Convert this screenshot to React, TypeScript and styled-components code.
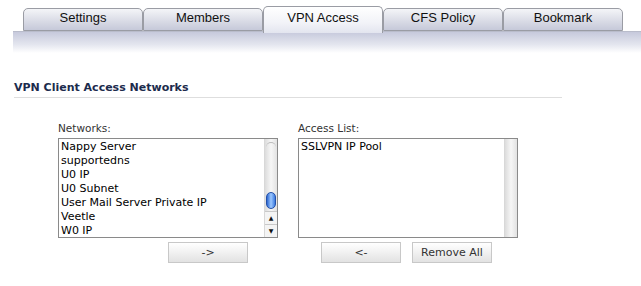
import React from "react";
import styled, { createGlobalStyle } from "styled-components";

const Global = createGlobalStyle`
  html, body {
    margin: 0;
    padding: 0;
    background: #fff;
  }
  body {
    font-family: "DejaVu Sans", Verdana, sans-serif;
  }
`;

const tabs = ["Settings", "Members", "VPN Access", "CFS Policy", "Bookmark"];
const networks = [
  "Nappy Server",
  "supportedns",
  "U0 IP",
  "U0 Subnet",
  "User Mail Server Private IP",
  "Veetle",
  "W0 IP",
];

const Page = styled.div`
  width: 641px;
  height: 286px;
  overflow: hidden;
`;

const TabBar = styled.div`
  display: flex;
  align-items: flex-end;
  height: 31px;
  padding-left: 23px;
`;

const Tab = styled.div<{ $active?: boolean }>`
  box-sizing: border-box;
  width: 120px;
  height: ${(p) => (p.$active ? "27px" : "23px")};
  margin-bottom: ${(p) => (p.$active ? "-2px" : "0")};
  border: 1px solid #9a9ca4;
  border-bottom: ${(p) => (p.$active ? "none" : "1px solid #9a9ca4")};
  border-radius: 5px 5px 0 0;
  background: ${(p) =>
    p.$active
      ? "linear-gradient(#ffffff, #f2f3f8 60%, #e3e5ef)"
      : "linear-gradient(#f4f5f8, #d8dae5 60%, #c6c9d9)"};
  font-family: "Liberation Sans", Arial, sans-serif;
  font-size: 13px;
  color: #111;
  text-align: center;
  line-height: ${(p) => (p.$active ? "22px" : "17px")};
  position: relative;
  z-index: ${(p) => (p.$active ? 2 : 1)};
`;

const Band = styled.div`
  margin-left: 13px;
  height: 21px;
  background: linear-gradient(#c6c9dc, #e4e6ef 60%, #ffffff);
  border-top: 1px solid #b9bccb;
`;

const Section = styled.div`
  padding: 28px 0 0 14px;
`;

const Heading = styled.div`
  width: 548px;
  font-weight: bold;
  font-size: 11px;
  color: #1c2b4d;
  padding-bottom: 3px;
  border-bottom: 1px solid #dedede;
`;

const Lists = styled.div`
  display: flex;
  gap: 20px;
  margin: 24px 0 0 44px;
`;

const Column = styled.div`
  display: flex;
  flex-direction: column;
  width: 220px;
`;

const Label = styled.div`
  font-size: 10.5px;
  color: #333;
  height: 16px;
`;

const ListBox = styled.div`
  box-sizing: border-box;
  height: 100px;
  border: 1px solid #8a8a8a;
  display: flex;
  background: #fff;
`;

const Items = styled.div`
  flex: 1;
  padding: 1px 0 0 2px;
  font-size: 11px;
  line-height: 14px;
  color: #000;
  white-space: nowrap;
  overflow: hidden;
`;

const Track = styled.div`
  width: 12px;
  display: flex;
  flex-direction: column;
  align-items: center;
  border-left: 1px solid #d8d8d8;
  background: linear-gradient(90deg, #dcdcdc, #f6f6f6 50%, #e2e2e2);
`;

const Gutter = styled.div`
  flex: 1;
  width: 10px;
  position: relative;
`;

const TrackCap = styled.div`
  position: absolute;
  top: 3px;
  left: 0;
  right: 0;
  height: 8px;
  border-radius: 5px 5px 0 0;
  border-top: 1px solid #bbb;
`;

const Thumb = styled.div`
  position: absolute;
  top: 53px;
  left: 0;
  width: 10px;
  height: 17px;
  border-radius: 5px;
  background: linear-gradient(90deg, #2c66d0, #9cc8ff 50%, #3b7ae0);
  border: 1px solid #2350a8;
  box-sizing: border-box;
`;

const Arrow = styled.div`
  width: 12px;
  height: 12px;
  font-size: 6px;
  line-height: 12px;
  text-align: center;
  color: #111;
  border-top: 1px solid #c9c9c9;
  background: #f4f4f4;
`;

const ButtonRow = styled.div<{ $offset: number }>`
  display: flex;
  gap: 11px;
  margin-top: 4px;
  padding-left: ${(p) => p.$offset}px;
`;

const Button = styled.div`
  box-sizing: border-box;
  width: 80px;
  height: 21px;
  border: 1px solid #c8c8c8;
  background: linear-gradient(#ffffff, #f1f1f1 50%, #e2e2e2);
  font-size: 11px;
  line-height: 19px;
  text-align: center;
  color: #333;
`;

export default function App() {
  return (
    <Page>
      <Global />
      <TabBar>
        {tabs.map((t) => (
          <Tab key={t} $active={t === "VPN Access"}>
            {t}
          </Tab>
        ))}
      </TabBar>
      <Band />
      <Section>
        <Heading>VPN Client Access Networks</Heading>
        <Lists>
          <Column>
            <Label>Networks:</Label>
            <ListBox>
              <Items>
                {networks.map((n) => (
                  <div key={n}>{n}</div>
                ))}
              </Items>
              <Track>
                <Gutter>
                  <TrackCap />
                  <Thumb />
                </Gutter>
                <Arrow>▲</Arrow>
                <Arrow>▼</Arrow>
              </Track>
            </ListBox>
            <ButtonRow $offset={110}>
              <Button>-&gt;</Button>
            </ButtonRow>
          </Column>
          <Column>
            <Label>Access List:</Label>
            <ListBox>
              <Items>
                <div>SSLVPN IP Pool</div>
              </Items>
              <Track />
            </ListBox>
            <ButtonRow $offset={23}>
              <Button>&lt;-</Button>
              <Button>Remove All</Button>
            </ButtonRow>
          </Column>
        </Lists>
      </Section>
    </Page>
  );
}
